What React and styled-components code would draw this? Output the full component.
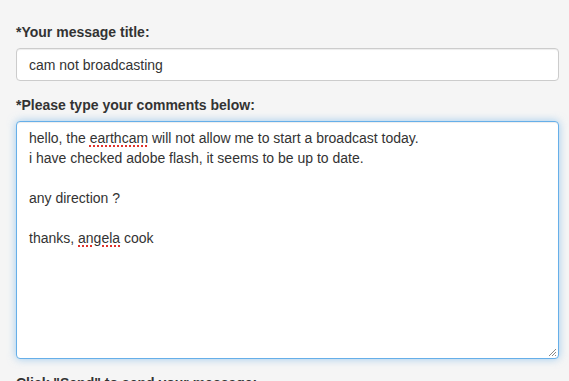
import React from 'react'
import styled, { createGlobalStyle } from 'styled-components'

const GlobalStyle = createGlobalStyle`
  html, body {
    margin: 0;
    padding: 0;
    background: #f5f5f5;
  }
  body {
    font-family: "Liberation Sans", Arial, Helvetica, sans-serif;
    font-size: 14px;
    line-height: 1.42857;
    color: #333;
  }
`

const Form = styled.form`
  padding: 22px 10px 0 16px;
  height: 381px;
  overflow: hidden;
  box-sizing: border-box;
`

const Group = styled.div`
  margin-bottom: 14px;
`

const Label = styled.label`
  display: block;
  font-weight: bold;
  font-size: 14px;
  line-height: 20px;
  margin-bottom: 6px;
  color: #333;
`

const Input = styled.input`
  display: block;
  width: 100%;
  height: 33px;
  box-sizing: border-box;
  padding: 6px 12px;
  font-family: inherit;
  font-size: 14px;
  color: #333;
  background: #fff;
  border: 1px solid #ccc;
  border-radius: 4px;
  box-shadow: inset 0 1px 1px rgba(0, 0, 0, 0.075);
  outline: none;
`

const TextBox = styled.div`
  position: relative;
  box-sizing: border-box;
  width: 100%;
  height: ${p => p.rows * 20 + 38}px;
  padding: 6px 12px;
  background: #fff;
  border: 1px solid #66afe9;
  border-radius: 4px;
  box-shadow: inset 0 1px 1px rgba(0, 0, 0, 0.075), 0 0 8px rgba(102, 175, 233, 0.6);
  font-size: 14px;
  line-height: 20px;
  color: #333;
  white-space: pre-wrap;
`

const Misspelt = styled.span`
  text-decoration: underline dotted #e0312b;
  text-decoration-thickness: 2px;
  text-underline-offset: 2px;
`

const Grip = styled.svg`
  position: absolute;
  right: 1px;
  bottom: 1px;
  width: 9px;
  height: 9px;
`

export default function App() {
  return (
    <>
      <GlobalStyle />
      <Form onSubmit={e => e.preventDefault()}>
        <Group>
          <Label>*Your message title:</Label>
          <Input defaultValue="cam not broadcasting" />
        </Group>
        <Group>
          <Label>*Please type your comments below:</Label>
          <TextBox rows={10} role="textbox">
            {'hello, the '}<Misspelt>earthcam</Misspelt>{' will not allow me to start a broadcast today.\ni have checked adobe flash, it seems to be up to date.\n\nany direction ?\n\nthanks, '}<Misspelt>angela</Misspelt>{' cook'}
            <Grip viewBox="0 0 9 9">
              <path d="M1 8 L8 1 M4 8 L8 4 M7 8 L8 7" stroke="#888" strokeWidth="1" />
            </Grip>
          </TextBox>
        </Group>
        <Group>
          <Label>Click "Send" to send your message:</Label>
        </Group>
      </Form>
    </>
  )
}
